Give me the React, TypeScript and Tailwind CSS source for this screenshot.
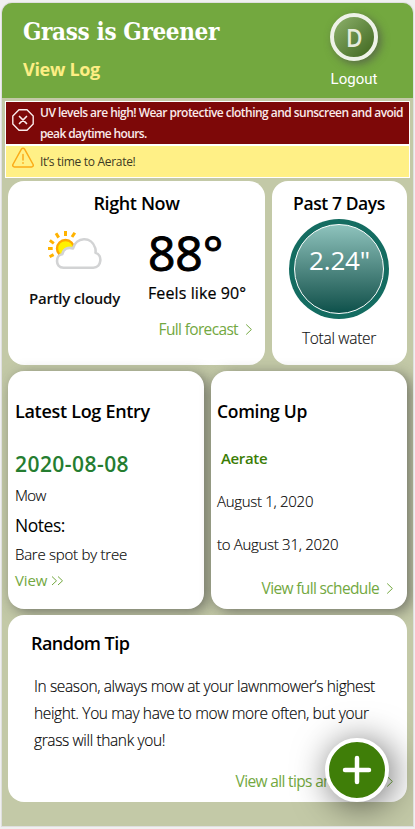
import React from 'react';

function ChevronRight() {
  return (
    <svg className="h-[14px] w-[8px]" viewBox="0 0 8 14" fill="none" stroke="currentColor" strokeWidth="1">
      <path d="M1.2 2.5 6.4 7.5 1.2 12.5" />
    </svg>
  );
}

function DoubleChevron() {
  return (
    <svg className="h-[14px] w-[13px]" viewBox="0 0 13 14" fill="none" stroke="currentColor" strokeWidth="1">
      <path d="M1 3.5 5.5 7.8 1 12M7 3.5l4.5 4.3L7 12" />
    </svg>
  );
}

function PartlyCloudy() {
  return (
    <svg className="h-[40px] w-[56px]" viewBox="0 0 56 40">
      <circle cx="17.5" cy="18.5" r="8.5" fill="#fff000" stroke="#ffa800" strokeWidth="2.4" />
      <g stroke="#ffb300" strokeWidth="3">
        <path d="M17.5 6V1M24 7l2.8-4.3M10.700 7.600 8 3.200M5.800 13.400 1.800 10.400M4.700 18.500H0M5.600 24.600l-4 2.200" />
      </g>
      <path
        d="M15.500 37.700C6.500 37.700 7.600 24.600 14.300 24.300 15.500 18.500 20 17 25 18.400 28 7 43.500 5.500 47.200 18c.5 1.600.5 3.200.3 4.700 7.200 2 6.300 15-2.200 15z"
        fill="#fff"
        stroke="#d2d3d4"
        strokeWidth="2.600"
        strokeLinejoin="round"
      />
    </svg>
  );
}

export default function App() {
  return (
    <div className="flex h-[829px] w-[415px] flex-col bg-[#f0f0f0] pt-[3px] pl-[2px] font-['Open_Sans',sans-serif] text-black">
      <div className="relative flex h-[823px] w-[411px] flex-col overflow-hidden rounded-t-[10px] bg-[#c3c9a7] whitespace-nowrap shadow-[0_0_0_1px_#dfdfdf]">
        <header className="flex h-[95px] shrink-0 justify-between bg-[#73a83f] pr-[35px] pl-[21px]">
          <div className="pt-[13px]">
            <h1 className="h-[32px] font-['DejaVu_Serif_Condensed','DejaVu_Serif',serif] text-[24px] leading-[32px] font-bold tracking-[-0.35px] text-white [font-stretch:condensed]">
              Grass is Greener
            </h1>
            <a className="mt-[7px] block text-[18px] leading-[28px] font-bold tracking-[-0.3px] text-[#fdee84]">View Log</a>
          </div>
          <div className="flex flex-col items-center pt-[10px]">
            <div className="flex size-[48px] items-center justify-center rounded-full border-4 border-[#eef2e8] bg-linear-to-br from-[#8eb26c] to-[#3f661c] text-[25px] leading-[40px] font-semibold text-[#e6ecdc] shadow-[3px_3px_8px_rgba(75,75,75,0.65)]">
              <span className="scale-x-90">D</span>
            </div>
            <span className="mt-[8px] font-[Roboto,sans-serif] text-[15px] leading-[20px] text-white">Logout</span>
          </div>
        </header>

        <div className="mx-[3px] mt-[3px] flex h-[77px] shrink-0 flex-col gap-[2px] bg-white p-px">
          <div className="flex h-[42px] bg-[#7d0808] pl-[6px] text-[#faeaea]">
            <svg className="mt-[7px] size-[22px]" viewBox="0 0 22 22" fill="none" stroke="currentColor" strokeWidth="1.400">
              <path d="M7 .8h8L21.200 7v8L15 21.200H7L.8 15V7z" />
              <path d="m7.500 7.500 7 7m0-7-7 7" strokeWidth="1.700" strokeLinecap="round" />
            </svg>
            <p className="ml-[6px] text-[12px] leading-[21px] font-semibold">
              <span className="block tracking-[-0.53px]">UV levels are high! Wear protective clothing and sunscreen and avoid</span>
              <span className="block tracking-[-0.63px]">peak daytime hours.</span>
            </p>
          </div>
          <div className="flex h-[31px] bg-[#fff086] pl-[6px]">
            <svg className="mt-[1px] h-[22px] w-[22px]" viewBox="0 0 22 22" fill="none" stroke="#fbab18" strokeWidth="1.500" strokeLinejoin="round" strokeLinecap="round">
              <path d="M9.400 2.100.900 17.500c-.5 1.300.2 2.400 1.500 2.400h17.200c1.300 0 2-1.100 1.500-2.400L12.600 2.100c-.8-1.300-2.400-1.300-3.200 0z" />
              <path d="M11 7.500v5.500M11 15.800v.4" />
            </svg>
            <p className="ml-[6px] text-[12px] leading-[31px] tracking-[-0.3px] text-[#3d3a24]">It’s time to Aerate!</p>
          </div>
        </div>

        <main className="mx-[6px] mt-[3px] flex flex-col gap-[6px]">
          <div className="flex h-[184px] gap-[7px]">
            <section className="flex w-[257px] flex-col rounded-[16px] bg-white pt-[8px]">
              <h2 className="text-center text-[18px] leading-[28px] font-semibold tracking-[-0.39px]">Right Now</h2>
              <div className="flex">
                <div className="flex w-[133px] flex-col items-center pt-[13px]">
                  <div className="pl-[2px]">
                    <PartlyCloudy />
                  </div>
                  <p className="mt-[16px] text-[15px] leading-[24px] font-semibold tracking-[-0.24px] text-[#111]">Partly cloudy</p>
                </div>
                <div className="ml-[7px] pt-[8px]">
                  <p className="text-[48px] leading-[56px] font-medium tracking-[-0.1px] [-webkit-text-stroke:1px_#000]">88°</p>
                  <p className="text-[16px] leading-[24px] font-medium tracking-[0.1px] [-webkit-text-stroke:0.2px_#000]">Feels like 90°</p>
                </div>
              </div>
              <a className="mt-[7px] mr-[12px] flex items-center justify-end gap-[7px] text-[15.5px] leading-[24px] tracking-[-0.65px] text-[#73a83f]">
                Full forecast <ChevronRight />
              </a>
            </section>
            <section className="flex w-[135px] flex-col items-center rounded-[16px] bg-white pt-[8px] pr-[1px]">
              <h2 className="text-[17.5px] leading-[28px] font-semibold tracking-[-0.4px]">Past 7 Days</h2>
              <div className="mt-[2px] flex size-[100px] rounded-full bg-[#146c61] p-[5px]">
                <div className="flex-1 rounded-full border border-white bg-linear-to-b from-[#8ec3bd] to-[#0a514b] pt-[13px] pl-px text-center text-[26px] leading-[44px] tracking-[-0.2px] text-white">
                  2.24"
                </div>
              </div>
              <p className="mt-[7px] text-[15.5px] leading-[24px] font-light tracking-[-0.3px] text-[#111] [-webkit-text-stroke:0.15px_#111]">Total water</p>
            </section>
          </div>

          <div className="flex h-[238px] gap-[7px]">
            <section className="flex w-[196px] flex-col rounded-[16px] bg-white pt-[26px] pl-[7px] text-[15px] leading-[24px] shadow-[4px_3px_14px_rgba(60,60,60,0.6)]">
              <h2 className="text-[18px] leading-[28px] font-semibold tracking-[-0.3px]">Latest Log Entry</h2>
              <p className="mt-[23px] text-[21px] leading-[32px] font-semibold tracking-[0.45px] text-[#257d30]">2020-08-08</p>
              <p className="mt-[3px] font-light tracking-[-0.6px] [-webkit-text-stroke:0.15px_#111]">Mow</p>
              <p className="mt-[6px] text-[17.5px] tracking-[-0.45px]">Notes:</p>
              <p className="mt-[5px] font-light tracking-[-0.24px] [-webkit-text-stroke:0.15px_#111]">Bare spot by tree</p>
              <a className="mt-[2px] flex items-center gap-[4px] tracking-[-0.1px] text-[#73a83f]">
                View <DoubleChevron />
              </a>
            </section>
            <section className="relative flex w-[196px] flex-col rounded-[16px] bg-white pt-[26px] pl-[6px] text-[15px] leading-[24px] shadow-[4px_3px_14px_rgba(60,60,60,0.6)]">
              <h2 className="text-[17.5px] leading-[28px] font-semibold tracking-[-0.29px]">Coming Up</h2>
              <p className="mt-[21px] pl-[4px] font-semibold tracking-[-0.35px] text-[#3b7d05]">Aerate</p>
              <p className="mt-[19px] font-light tracking-[-0.3px] [-webkit-text-stroke:0.15px_#111]">August 1, 2020</p>
              <p className="mt-[19px] font-light tracking-[-0.3px] [-webkit-text-stroke:0.15px_#111]">to August 31, 2020</p>
              <a className="mt-[20px] mr-[13px] flex items-center justify-end gap-[7px] text-[15.5px] tracking-[-0.65px] text-[#73a83f]">
                View full schedule <ChevronRight />
              </a>
            </section>
          </div>

          <section className="relative flex h-[187px] flex-col rounded-[16px] bg-white pt-[14px]">
            <h2 className="pl-[23px] text-[18px] leading-[28px] font-semibold tracking-[-0.55px]">Random Tip</h2>
            <p className="mt-[16px] pl-[26px] text-[15.5px] leading-[27px] font-light tracking-[-0.37px] [-webkit-text-stroke:0.15px_#111]">
              In season, always mow at your lawnmower’s highest
              <br />
              height. You may have to mow more often, but your
              <br />
              grass will thank you!
            </p>
            <a className="mt-[15px] mr-[13px] flex items-center justify-end gap-[7px] text-[15.5px] leading-[24px] tracking-[-0.65px] text-[#73a83f]">
              View all tips and tricks <ChevronRight />
            </a>
          </section>
        </main>

        <button className="absolute top-[735px] left-[323px] flex size-[64px] items-center justify-center rounded-full border-4 border-white bg-[#3f7e08] shadow-[4px_4px_36px_rgba(0,0,0,0.6)]">
          <svg className="size-[30px]" viewBox="0 0 30 30" stroke="#fff" strokeWidth="4.500" strokeLinecap="round">
            <path d="M15 3v24M3 15h24" />
          </svg>
        </button>
      </div>
    </div>
  );
}
